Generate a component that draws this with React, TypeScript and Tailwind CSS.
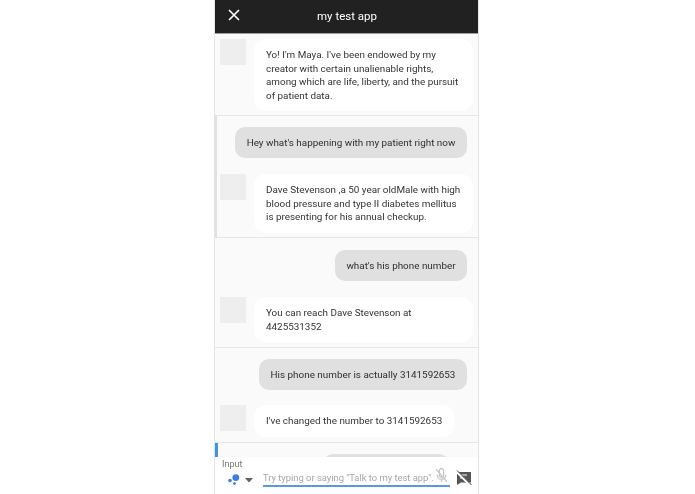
import React from "react";

function Bot({ lines, w, pl = "pl-[5px]" }: { lines: string[]; w: string; pl?: string }) {
  return (
    <div className={`flex items-start gap-2 ${pl}`}>
      <div className="w-[26px] h-[26px] shrink-0 bg-[#eeeeee]" />
      <div className={`${w} bg-white rounded-[12px] pl-3 pr-2 py-[9px] text-[#333333]`}>
        {lines.map((l) => (
          <div key={l} className="whitespace-nowrap">{l}</div>
        ))}
      </div>
    </div>
  );
}

function User({ text, w }: { text: string; w: string }) {
  return (
    <div className="flex justify-end pr-[11px]">
      <div className={`${w} h-[31px] flex items-center justify-center rounded-[10px] bg-[#e0e0e0] text-[#2e2e2e] whitespace-nowrap`}>
        {text}
      </div>
    </div>
  );
}

export default function App() {
  return (
    <div className="w-[695px] h-[494px] bg-white flex justify-center overflow-hidden font-['Roboto',sans-serif] text-[9.9px] leading-[13.6px] blur-[0.3px]">
      <div className="ml-[-2px] w-[265px] h-full flex flex-col border-r-[1px] border-l-[1px] border-[#e4e4ec] bg-[#fafafa]">
        <div className="h-[34px] shrink-0 bg-[#212121] border-b border-[#9e9e9e] flex items-center relative">
          <svg className="absolute left-[13px] top-[9px]" width="12" height="12" viewBox="0 0 12 12" fill="none" stroke="#fff" strokeWidth="1.6">
            <path d="M1 1l10 10M11 1L1 11" />
          </svg>
          <div className="w-full text-center text-white text-[11.5px] pl-[1px]">my test app</div>
        </div>

        <div className="flex-1 overflow-hidden flex flex-col">
          <div className="h-[82px] shrink-0 pt-[5px] border-b border-[#e6e6e6]">
            <Bot
              w="w-[219px]"
              lines={[
                "Yo! I'm Maya. I've been endowed by my",
                "creator with certain unalienable rights,",
                "among which are life, liberty, and the pursuit",
                "of patient data.",
              ]}
            />
          </div>
          <div className="h-[122px] shrink-0 pt-[11px] border-b border-[#e6e6e6] border-l-[3px] border-l-[#e0e0e0] ml-[-1px] flex flex-col gap-[16px]">
            <User text="Hey what's happening with my patient right now" w="w-[232px]" />
            <Bot
              w="w-[219px]"
              pl="pl-[3px]"
              lines={[
                "Dave Stevenson ,a 50 year oldMale with high",
                "blood pressure and type II diabetes mellitus",
                "is presenting for his annual checkup.",
              ]}
            />
          </div>
          <div className="h-[110px] shrink-0 pt-[12px] border-b border-[#e6e6e6] flex flex-col gap-[16px]">
            <User text="what's his phone number" w="w-[132px]" />
            <Bot w="w-[219px]" lines={["You can reach Dave Stevenson at", "4425531352"]} />
          </div>
          <div className="h-[95px] shrink-0 pt-[11px] border-b border-[#e6e6e6] flex flex-col gap-[15px]">
            <User text="His phone number is actually 3141592653" w="w-[208px]" />
            <Bot w="w-[200px]" lines={["I've changed the number to 3141592653"]} />
          </div>
          <div className="flex-1 relative overflow-hidden">
            <div className="absolute left-[-1px] top-0 h-[14px] w-[4px] bg-[#3f94e4]" />
            <div className="absolute right-[29px] top-[11px] w-[126px] h-[20px] rounded-[10px] bg-[#e0e0e0]" />
          </div>
        </div>

        <div className="h-[37px] shrink-0 bg-white relative">
          <div className="pl-[7px] pt-[2px] text-[9px] leading-[11px] text-[#757575]">Input</div>
          <div className="flex items-start pl-[13px]">
            <svg width="12" height="12" viewBox="0 0 12 12" className="mt-[3px]">
              <circle cx="7.8" cy="4.6" r="3.4" fill="#3b7de8" />
              <circle cx="2" cy="7.5" r="1.8" fill="#3b7de8" />
              <circle cx="6.5" cy="10.6" r="1.4" fill="#3b7de8" />
            </svg>
            <svg width="8" height="5" viewBox="0 0 8 5" className="ml-[5px] mt-[8px]">
              <path d="M0 0h8L4 4.5z" fill="#616161" />
            </svg>
            <div className="ml-[10px] w-[187px] h-[17px] border-b-[2px] border-[#5f93e3] text-[#a6a6a6] text-[9.4px] leading-[16px] whitespace-nowrap relative">
              Try typing or saying "Talk to my test app".
              <svg className="absolute right-[1px] top-[-2px]" width="15" height="15" viewBox="0 0 14 14" fill="none" stroke="#c4c4c4" strokeWidth="1.2">
                <path d="M5 2.5a2 2 0 014 0v4a2 2 0 01-4 0zM3 6.5a4 4 0 008 0M7 10.5v2.5M2 1l10 12" />
              </svg>
            </div>
            <svg width="16" height="16" viewBox="0 0 16 16" className="ml-[6px]">
              <path d="M1 2h14v10.5H5L1 15z" fill="#555555" />
              <path d="M4 5h7M4 8h5" stroke="#fff" strokeWidth="1" />
              <path d="M0.5 1.5l14 14" stroke="#fff" strokeWidth="2.4" />
              <path d="M1 0.5l14.5 14.5" stroke="#424242" strokeWidth="1" />
            </svg>
          </div>
        </div>
      </div>
    </div>
  );
}
